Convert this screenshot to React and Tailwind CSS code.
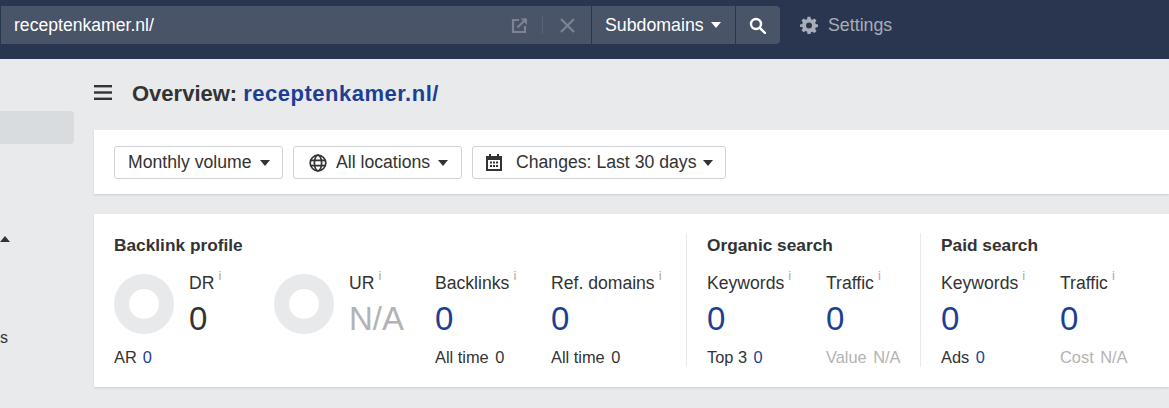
import React from "react";

const Caret = ({ className = "", color = "#333" }) => (
  <svg width="10" height="6" viewBox="0 0 10 6" className={className}><path d="M0 0h10L5 6z" fill={color} /></svg>
);

const Info = () => <span className="absolute -right-[7px] -top-[4px] text-[13px] leading-none text-[#aaaaaa]">i</span>;

const Metric = ({ label, value, valueClass = "text-[#1c3f94]", sub, subVal, subClass = "text-[#333]", subValClass = "text-[#333]", className = "" }) => (
  <div className={`flex flex-col ${className}`}>
    <div className="h-[22px] text-[17.6px] leading-[22px] text-[#333]"><span className="relative">{label}<Info /></span></div>
    <div className={`mt-[7px] h-[36px] text-[33px] leading-[36px] ${valueClass}`}>{value}</div>
    <div className="mt-[10px] flex gap-[6.5px] text-[16.4px] leading-[20px]"><span className={subClass}>{sub}</span><span className={subValClass}>{subVal}</span></div>
  </div>
);

const Donut = () => <div className="mt-[2px] h-[60px] w-[60px] shrink-0 rounded-full border-[15px] border-[#e8e9eb] bg-white" />;

const Btn = ({ children, className = "" }) => (
  <div className={`flex h-[33px] items-center rounded-[3px] border border-[#cfd2d6] bg-white text-[17.65px] text-[#333] ${className}`}>{children}</div>
);

export default function App() {
  return (
    <div className="flex h-[408px] w-[1169px] flex-col overflow-hidden bg-[#e8eaec] [font-family:'Liberation_Sans',Arial,sans-serif]">
      <header className="flex h-[59px] shrink-0 items-start bg-[#2a3650] pl-[1px] pt-[6px]">
        <div className="flex h-[38px] w-[779px] overflow-hidden rounded-r-[4px] bg-[#4a5468] text-white">
          <div className="flex w-[590px] items-center pl-[13px] text-[17.6px]">
            <span className="flex-1">receptenkamer.nl/</span>
            <svg width="17" height="17" viewBox="0 0 17 17" fill="none" stroke="#7c8494" strokeWidth="2.2" className="mr-[14px]">
              <path d="M8 3H2v12h12V9" /><path d="M6.5 10.5L15 2" /><path d="M9.5 1.5h6.5v6.5" fill="#7c8494" stroke="none" />
            </svg>
            <div className="h-[18px] w-px bg-[#5b6477]" />
            <svg width="15" height="15" viewBox="0 0 15 15" stroke="#7c8494" strokeWidth="2.2" className="ml-[17px] mr-[16px]">
              <path d="M1 1l13 13M14 1L1 14" />
            </svg>
          </div>
          <div className="flex w-[144px] items-center border-l border-[#2a3650] pl-[13px] text-[17.75px]">
            Subdomains<Caret color="#fff" className="ml-[7px]" />
          </div>
          <div className="flex flex-1 items-center justify-center border-l border-[#2a3650] pr-[1px]">
            <svg width="17" height="17" viewBox="0 0 17 17" fill="none" stroke="#fff" strokeWidth="2.4">
              <circle cx="7" cy="7" r="5" /><path d="M10.8 10.8L16 16" strokeLinecap="round" />
            </svg>
          </div>
        </div>
        <div className="ml-[20px] flex h-[38px] items-center gap-[10px] text-[17.8px] text-[#a8adb7]">
          <svg width="18" height="18" viewBox="0 0 24 24" fill="#a8adb7">
            <path fillRule="evenodd" d="M10 1h4l.6 3.2 1.9.8 2.7-1.8 2.8 2.8-1.8 2.7.8 1.9L24 11.2v3.6l-3 .6-.8 1.9 1.8 2.7-2.8 2.8-2.7-1.8-1.9.8L14 24h-4l-.6-3.2-1.9-.8-2.7 1.8-2.8-2.8 1.8-2.7-.8-1.9L0 14.8v-3.6l3-.6.8-1.9L2 6l2.8-2.8L7.5 5l1.9-.8zM12 8.5a4 4 0 100 8 4 4 0 000-8z" />
          </svg>
          Settings
        </div>
      </header>
      <div className="flex flex-1">
        <aside className="w-[94px] shrink-0">
          <div className="mt-[52px] h-[33px] w-[74px] rounded-r-[4px] bg-[#d9dcdf]" />
          <svg width="10" height="6" viewBox="0 0 10 6" className="mt-[92px]"><path d="M0 6h10L5 0z" fill="#333" /></svg>
          <div className="mt-[86px] h-[20px] text-[16px] leading-[20px] text-[#333]">s</div>
        </aside>
        <main className="flex-1">
          <div className="flex h-[71px] items-center pb-[2px]">
            <svg width="18" height="15" viewBox="0 0 18 15" fill="#333" className="-mt-[2px]"><rect width="18" height="2.4" y="0" /><rect width="18" height="2.4" y="6.3" /><rect width="18" height="2.4" y="12.6" /></svg>
            <h1 className="ml-[20px] text-[22px] font-bold text-[#333]">Overview: <span className="tracking-[0.5px] text-[#1c3f94]">receptenkamer.nl/</span></h1>
          </div>
          <section className="flex h-[64px] items-start gap-[10px] bg-white pl-[20px] pt-[16px] shadow-[0_1px_2px_rgba(0,0,0,0.12)]">
            <Btn className="w-[169px] pl-[13px]">Monthly volume<Caret className="ml-[8px]" /></Btn>
            <Btn className="w-[169px] pl-[15px]">
              <svg width="18" height="18" viewBox="0 0 18 18" fill="none" stroke="#333" strokeWidth="1.7" className="mr-[9px]">
                <circle cx="9" cy="9" r="7.8" /><ellipse cx="9" cy="9" rx="3.6" ry="7.8" /><path d="M1.5 6.3h15M1.5 11.7h15" />
              </svg>
              All locations<Caret className="ml-[8px]" />
            </Btn>
            <Btn className="w-[254px] pl-[13px]">
              <svg width="16" height="17" viewBox="0 0 16 17" className="mr-[14px]">
                <path fillRule="evenodd" fill="#333" d="M3 0h2v2h6V0h2v2h3v15H0V2h3zM2 6v9h12V6z" />
                <path fill="#333" d="M4 7.5h2v2H4zM7 7.5h2v2H7zM10 7.5h2v2h-2zM4 11h2v2H4zM7 11h2v2H7zM10 11h2v2h-2z" />
              </svg>
              Changes: Last 30 days<Caret className="ml-[7px]" />
            </Btn>
          </section>
          <section className="mt-[20px] flex h-[173px] bg-white pl-[20px] pt-[19px] shadow-[0_1px_2px_rgba(0,0,0,0.12)]">
            <div className="w-[572px] shrink-0">
              <h2 className="h-[24px] text-[17.3px] font-bold leading-[24px] text-[#333]">Backlink profile</h2>
              <div className="mt-[15px] flex">
                <div className="w-[160px] shrink-0">
                  <div className="flex h-[74px]">
                    <Donut />
                    <div className="ml-[15px]">
                      <div className="h-[22px] text-[17.6px] leading-[22px] text-[#333]"><span className="relative">DR<Info /></span></div>
                      <div className="mt-[7px] h-[36px] text-[33px] leading-[36px] text-[#333]">0</div>
                    </div>
                  </div>
                  <div className="flex gap-[6px] pt-[1px] text-[16.4px] leading-[20px] text-[#333]">AR <span className="text-[#1c3f94]">0</span></div>
                </div>
                <div className="flex h-[74px] w-[161px] shrink-0">
                  <Donut />
                  <div className="ml-[15px]">
                    <div className="h-[22px] text-[17.6px] leading-[22px] text-[#333]"><span className="relative">UR<Info /></span></div>
                    <div className="mt-[7px] h-[36px] text-[33px] leading-[36px] text-[#b3b3b3]">N/A</div>
                  </div>
                </div>
                <Metric className="w-[116px] shrink-0" label="Backlinks" value="0" sub="All time" subVal="0" />
                <Metric label="Ref. domains" value="0" sub="All time" subVal="0" />
              </div>
            </div>
            <div className="mb-[20px] w-[234px] shrink-0 border-l border-[#e8e9eb] pl-[20px]">
              <h2 className="h-[24px] text-[17.3px] font-bold leading-[24px] text-[#333]">Organic search</h2>
              <div className="mt-[15px] flex">
                <Metric className="w-[119px] shrink-0" label="Keywords" value="0" sub="Top 3" subVal="0" subValClass="text-[#1c3f94]" />
                <Metric label="Traffic" value="0" sub="Value" subVal="N/A" subClass="text-[#b3b3b3]" subValClass="text-[#b3b3b3]" />
              </div>
            </div>
            <div className="mb-[20px] flex-1 border-l border-[#e8e9eb] pl-[20px]">
              <h2 className="h-[24px] text-[17.3px] font-bold leading-[24px] text-[#333]">Paid search</h2>
              <div className="mt-[15px] flex">
                <Metric className="w-[119px] shrink-0" label="Keywords" value="0" sub="Ads" subVal="0" subValClass="text-[#1c3f94]" />
                <Metric label="Traffic" value="0" sub="Cost" subVal="N/A" subClass="text-[#b3b3b3]" subValClass="text-[#b3b3b3]" />
              </div>
            </div>
          </section>
        </main>
      </div>
    </div>
  );
}
